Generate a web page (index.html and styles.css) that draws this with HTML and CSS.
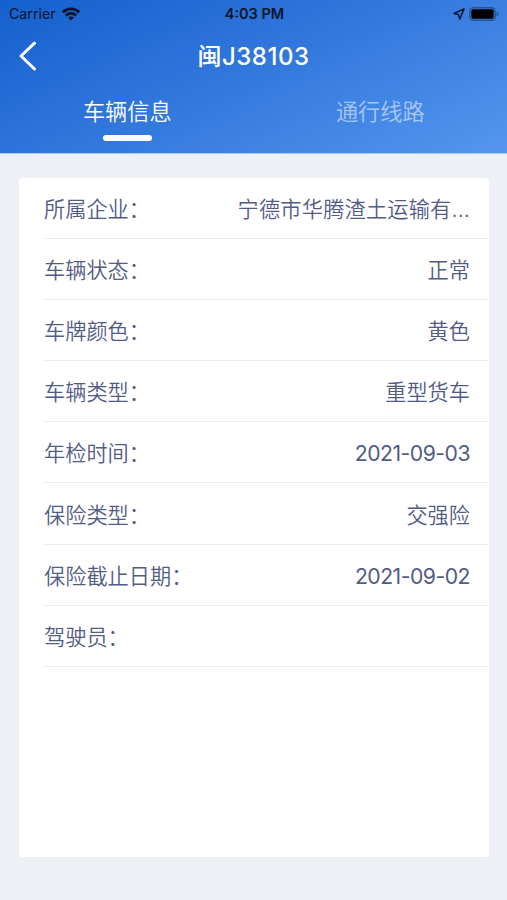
FILE: index.html
```
<!DOCTYPE html>
<html lang="zh-CN">
<head>
    <meta charset="UTF-8">
    <meta name="viewport" content="width=device-width, initial-scale=1.0">
    <title>闽J38103</title>
    <link rel="stylesheet" href="styles.css">
</head>
<body>
    <header>
        <div class="status-bar">
            <div class="carrier">
                <span>Carrier</span>
                <svg class="wifi" width="18" height="14" viewBox="0 0 18 14" fill="none" stroke="#08142c" stroke-width="2.8">
                    <path d="M.8 5.2C5.4 .7 12.6 .7 17.2 5.2"/>
                    <path d="M3.8 8.5C6.7 5.7 11.3 5.7 14.2 8.5"/>
                    <path d="M6 10.6C7.7 9 10.3 9 12 10.6L9 13.6Z" fill="#08142c" stroke="none"/>
                </svg>
            </div>
            <span class="time">4:03 PM</span>
            <div class="indicators">
                <svg width="12" height="12" viewBox="0 0 12 12" fill="none" stroke="#08142c" stroke-width="1.5" stroke-linejoin="round">
                    <path d="M11 1L1 5.4L5.4 6.4L6.8 11Z"/>
                </svg>
                <svg class="battery" width="31" height="14" viewBox="0 0 31 14">
                    <rect x=".8" y=".8" width="25.4" height="12.4" rx="3.6" fill="none" stroke="#285391" stroke-width="1.4"/>
                    <rect x="2.3" y="2.3" width="22.4" height="9.4" rx="2" fill="#000"/>
                    <path d="M27.5 4.8C30.3 5.6 30.3 8.4 27.5 9.2Z" fill="#285391"/>
                </svg>
            </div>
        </div>

        <div class="nav-bar">
            <a class="back" href="#" aria-label="返回">
                <svg width="18" height="30" viewBox="0 0 18 30" fill="none" stroke="#fff" stroke-width="3" stroke-linecap="round" stroke-linejoin="round">
                    <path d="M15.5 2.2L2 15L15.5 28"/>
                </svg>
            </a>
            <h1>闽J38103</h1>
        </div>

        <nav class="tabs">
            <a class="tab active" href="#">车辆信息</a>
            <a class="tab" href="#">通行线路</a>
        </nav>
    </header>

    <main>
        <ul class="info-list">
            <li><span class="label">所属企业：</span><span class="value company">宁德市华腾渣土运输有...</span></li>
            <li><span class="label">车辆状态：</span><span class="value">正常</span></li>
            <li><span class="label">车牌颜色：</span><span class="value">黄色</span></li>
            <li><span class="label">车辆类型：</span><span class="value">重型货车</span></li>
            <li><span class="label">年检时间：</span><span class="value date">2021-09-03</span></li>
            <li><span class="label">保险类型：</span><span class="value">交强险</span></li>
            <li><span class="label">保险截止日期：</span><span class="value date">2021-09-02</span></li>
            <li><span class="label">驾驶员：</span><span class="value"></span></li>
        </ul>
    </main>
</body>
</html>
```
FILE: styles.css
```
* {
    box-sizing: border-box;
}

body {
    margin: 0;
    min-height: 900px;
    font-family: Inter, "Noto Sans CJK SC", sans-serif;
    background-color: #edf1f6;
    color: #525b86;
}

a {
    color: inherit;
    text-decoration: none;
}

svg {
    display: block;
}

header {
    height: 154px;
    background: linear-gradient(155deg, #1560ce 0%, #3076db 45%, #5496ef 100%);
    border-bottom: 1px solid #a9c9f5;
    color: #fff;
}

.status-bar {
    display: grid;
    grid-template-columns: 1fr auto 1fr;
    align-items: center;
    height: 27px;
    padding: 0 7px 0 9px;
    color: #08142c;
    font-size: 14.2px;
}

.carrier,
.indicators {
    display: flex;
    align-items: center;
}

.carrier {
    gap: 6px;
}

.indicators {
    justify-content: flex-end;
    gap: 4px;
}

.time {
    font-size: 14.5px;
    font-weight: 600;
}

.nav-bar {
    display: grid;
    grid-template-columns: 60px 1fr 60px;
    align-items: center;
    height: 58px;
}

.back {
    padding-left: 19px;
}

h1 {
    margin: 0;
    padding-top: 2px;
    font-size: 24px;
    font-weight: 500;
    line-height: 32px;
    letter-spacing: 0.5px;
    text-align: center;
}

.tabs {
    display: grid;
    grid-template-columns: 1fr 1fr;
}

.tab {
    display: flex;
    flex-direction: column;
    align-items: center;
    padding-top: 11px;
    font-size: 22.2px;
    font-weight: 350;
    line-height: 32px;
    color: rgba(255, 255, 255, 0.55);
}

.tab.active {
    padding-left: 1px;
    color: #fff;
}

.tab.active::after {
    content: "";
    width: 49px;
    height: 6px;
    margin-top: 7px;
    border-radius: 3px;
    background-color: #fff;
}

main {
    height: 679px;
    margin: 24px 18px 0 19px;
    padding-left: 25px;
    border-radius: 3px;
    background-color: #fff;
}

.info-list {
    margin: 0;
    padding: 0;
    list-style: none;
}

.info-list li {
    display: flex;
    align-items: center;
    justify-content: space-between;
    height: 61.1px;
    padding: 2px 19px 0 0;
    border-bottom: 1.5px solid #ececf0;
    font-size: 21.2px;
    font-weight: 350;
    line-height: 32px;
    white-space: nowrap;
}

.company {
    letter-spacing: 0.2px;
}

.date {
    font-weight: 400;
    letter-spacing: -0.5px;
}
```
